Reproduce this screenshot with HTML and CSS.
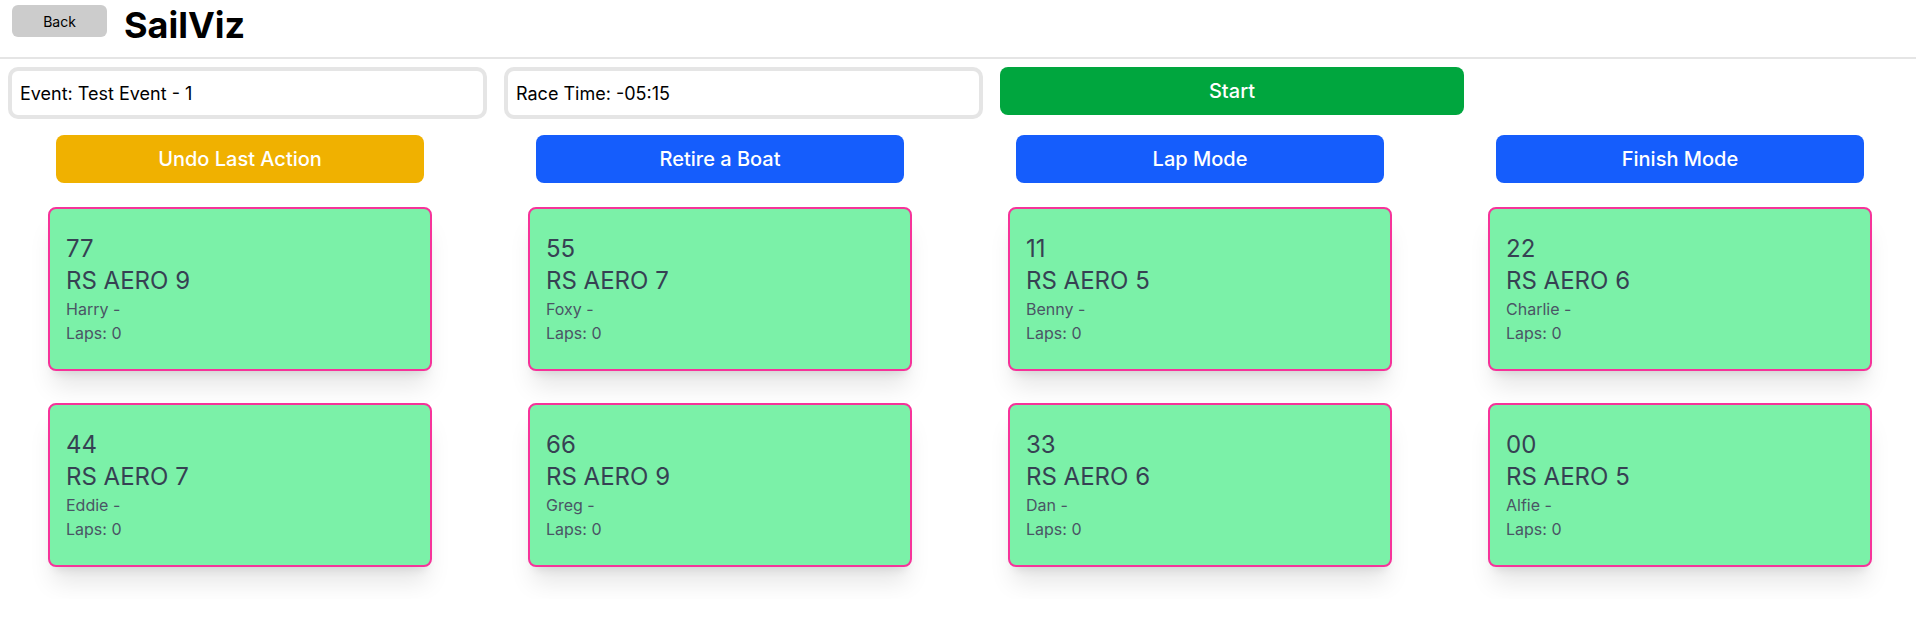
FILE: index.html
```html
<!DOCTYPE html>
<html lang="en">
<head>
<meta charset="utf-8">
<title>SailViz</title>
<link rel="stylesheet" href="styles.css">
</head>
<body>
<header class="topbar">
  <button class="back-btn">Back</button>
  <h1 class="title">SailViz</h1>
</header>
<section class="controls">
  <div class="field">Event: Test Event - 1</div>
  <div class="field">Race Time: -05:15</div>
  <button class="btn btn-start">Start</button>
</section>
<main class="board">
  <button class="btn action btn-undo">Undo Last Action</button>
  <button class="btn action btn-blue">Retire a Boat</button>
  <button class="btn action btn-blue">Lap Mode</button>
  <button class="btn action btn-blue">Finish Mode</button>

  <div class="card"><div class="sail">77</div><div class="cls">RS AERO 9</div><div class="meta">Harry -</div><div class="meta">Laps: 0</div></div>
  <div class="card"><div class="sail">55</div><div class="cls">RS AERO 7</div><div class="meta">Foxy -</div><div class="meta">Laps: 0</div></div>
  <div class="card"><div class="sail">11</div><div class="cls">RS AERO 5</div><div class="meta">Benny -</div><div class="meta">Laps: 0</div></div>
  <div class="card"><div class="sail">22</div><div class="cls">RS AERO 6</div><div class="meta">Charlie -</div><div class="meta">Laps: 0</div></div>

  <div class="card"><div class="sail">44</div><div class="cls">RS AERO 7</div><div class="meta">Eddie -</div><div class="meta">Laps: 0</div></div>
  <div class="card"><div class="sail">66</div><div class="cls">RS AERO 9</div><div class="meta">Greg -</div><div class="meta">Laps: 0</div></div>
  <div class="card"><div class="sail">33</div><div class="cls">RS AERO 6</div><div class="meta">Dan -</div><div class="meta">Laps: 0</div></div>
  <div class="card"><div class="sail">00</div><div class="cls">RS AERO 5</div><div class="meta">Alfie -</div><div class="meta">Laps: 0</div></div>
</main>
</body>
</html>
```
FILE: styles.css
```css
* { box-sizing: border-box; }

html, body {
  margin: 0;
  padding: 0;
  background: #ffffff;
  font-family: Inter, "Noto Sans", "Liberation Sans", sans-serif;
  color: #000;
  overflow: hidden;
}

.topbar {
  display: flex;
  align-items: flex-start;
  gap: 17px;
  height: 59px;
  padding: 5px 12px 0;
  border-bottom: 2px solid #e5e5e5;
}

.back-btn {
  width: 95px;
  height: 32px;
  border: none;
  border-radius: 6px;
  background: #cccccc;
  color: #000;
  font-family: Inter, "Liberation Sans", sans-serif;
  font-size: 14px;
  padding: 0;
}

.title {
  margin: 0;
  font-size: 36px;
  line-height: 40px;
  font-weight: 700;
  color: #000;
}

.controls {
  display: flex;
  align-items: flex-start;
  gap: 17px;
  padding: 8px 0 0 8px;
}

.field {
  width: 479px;
  height: 52px;
  border: 4px solid #e5e5e5;
  border-radius: 10px;
  padding: 0 8px;
  display: flex;
  align-items: center;
  font-size: 18px;
  color: #000;
}

.btn {
  border: none;
  border-radius: 8px;
  color: #fff;
  font-family: Inter, "Liberation Sans", sans-serif;
  font-size: 20px;
  font-weight: 500;
  line-height: 28px;
  padding: 10px 0;
}

.btn-start {
  width: 464px;
  background: #00a63e;
}

.board {
  display: grid;
  grid-template-columns: repeat(4, 384px);
  column-gap: 96px;
  padding: 16px 0 0 48px;
}

.action {
  margin: 0 8px 24px;
}

.btn-undo { background: #f0b100; }
.btn-blue { background: #155dfc; }

.card {
  height: 164px;
  margin-bottom: 32px;
  background: #7bf1a8;
  border: 2px solid #f6339a;
  border-radius: 8px;
  padding: 24px 16px;
  box-shadow: 0 20px 25px -5px rgba(0,0,0,0.1), 0 8px 10px -6px rgba(0,0,0,0.1);
}

.sail, .cls {
  font-size: 24px;
  line-height: 32px;
  color: #364153;
}

.meta {
  font-size: 16px;
  line-height: 24px;
  color: #4a5565;
}
```
